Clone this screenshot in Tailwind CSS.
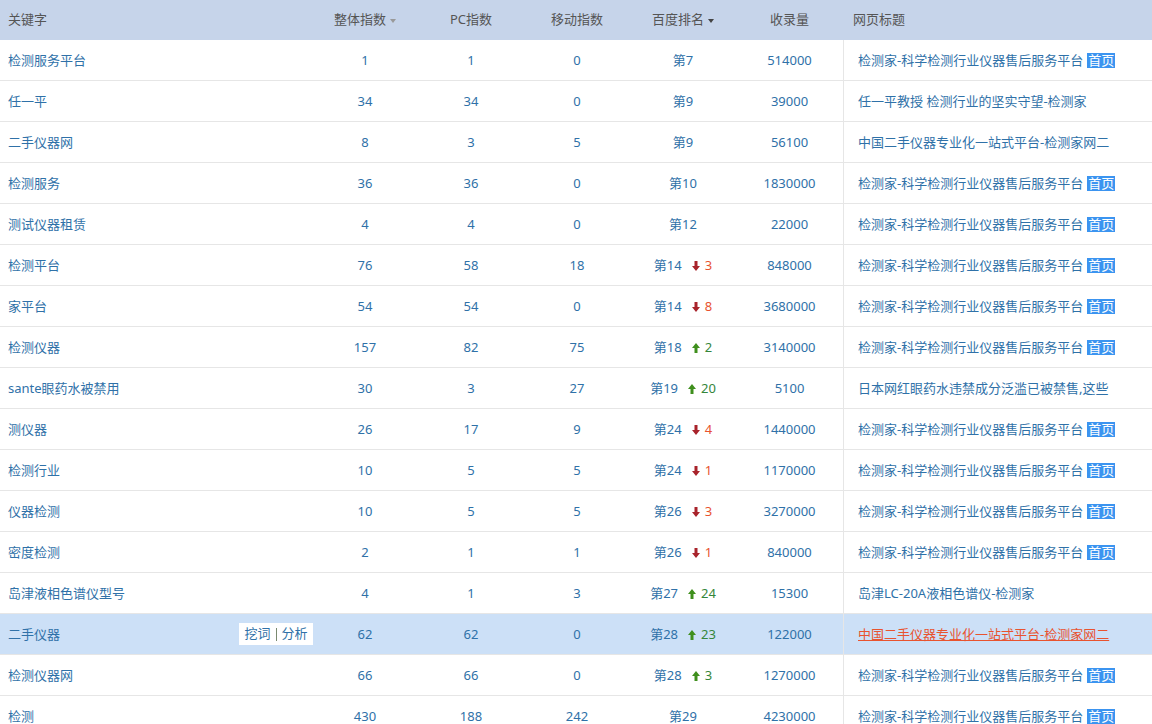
<!DOCTYPE html>
<html lang="zh-CN">
<head>
  <meta charset="UTF-8" />
  <title>关键字排名</title>
  <script src="https://cdn.jsdelivr.net/npm/@tailwindcss/browser@4"></script>
</head>
<body class="h-[724px] overflow-hidden bg-white font-['Noto_Sans','Noto_Sans_CJK_SC',sans-serif] text-[13px] text-[#2f71a8]">

  <!-- header -->
  <div class="flex h-10 items-center bg-[#c6d4ea] text-[#555]">
    <div class="w-[312px] pl-2">关键字</div>
    <div class="flex w-[106px] items-center justify-center gap-1">整体指数<i class="mt-0.5 border-x-[3.5px] border-t-4 border-x-transparent border-t-[#999]"></i></div>
    <div class="w-[106px] text-center">PC指数</div>
    <div class="w-[106px] text-center">移动指数</div>
    <div class="flex w-[106px] items-center justify-center gap-1">百度排名<i class="mt-0.5 border-x-[3.5px] border-t-4 border-x-transparent border-t-[#444]"></i></div>
    <div class="w-[107px] text-center">收录量</div>
    <div class="pl-[10px]">网页标题</div>
  </div>

  <!-- rows -->
  <table class="w-[1152px] table-fixed border-separate border-spacing-0 [&_td]:h-[41px] [&_td]:border-b [&_td]:border-[#e6e6e6] [&_td]:p-0 [&_td]:pt-0.5 [&_td:nth-child(-n+6)]:text-center [&_td:nth-child(6)]:border-r [&_td:last-child]:pl-[14px] [&_td:last-child]:text-left [&_td:first-child]:!pl-2 [&_td:first-child]:!text-left">
    <colgroup>
      <col class="w-[312px]" /><col class="w-[106px]" /><col class="w-[106px]" /><col class="w-[106px]" /><col class="w-[106px]" /><col class="w-[108px]" /><col />
    </colgroup>
    <tbody>
      <tr><td>检测服务平台</td><td>1</td><td>1</td><td>0</td><td>第7</td><td>514000</td><td>检测家-科学检测行业仪器售后服务平台<span class="ml-1 inline-block h-[15px] w-7 bg-[#3b94f0] text-center align-[0px] leading-[15px] text-white">首页</span></td></tr>
      <tr><td>任一平</td><td>34</td><td>34</td><td>0</td><td>第9</td><td>39000</td><td>任一平教授 检测行业的坚实守望-检测家</td></tr>
      <tr><td>二手仪器网</td><td>8</td><td>3</td><td>5</td><td>第9</td><td>56100</td><td>中国二手仪器专业化一站式平台-检测家网二</td></tr>
      <tr><td>检测服务</td><td>36</td><td>36</td><td>0</td><td>第10</td><td>1830000</td><td>检测家-科学检测行业仪器售后服务平台<span class="ml-1 inline-block h-[15px] w-7 bg-[#3b94f0] text-center align-[0px] leading-[15px] text-white">首页</span></td></tr>
      <tr><td>测试仪器租赁</td><td>4</td><td>4</td><td>0</td><td>第12</td><td>22000</td><td>检测家-科学检测行业仪器售后服务平台<span class="ml-1 inline-block h-[15px] w-7 bg-[#3b94f0] text-center align-[0px] leading-[15px] text-white">首页</span></td></tr>
      <tr><td>检测平台</td><td>76</td><td>58</td><td>18</td><td>第14<svg class="-mt-0.5 ml-[10px] mr-[5px] inline h-[10px] w-2" viewBox="0 0 8 10"><path fill="#a8232b" d="M2.5 0h3v5H8L4 10 0 5h2.5z"/></svg><span class="text-[#e8532f]">3</span></td><td>848000</td><td>检测家-科学检测行业仪器售后服务平台<span class="ml-1 inline-block h-[15px] w-7 bg-[#3b94f0] text-center align-[0px] leading-[15px] text-white">首页</span></td></tr>
      <tr><td>家平台</td><td>54</td><td>54</td><td>0</td><td>第14<svg class="-mt-0.5 ml-[10px] mr-[5px] inline h-[10px] w-2" viewBox="0 0 8 10"><path fill="#a8232b" d="M2.5 0h3v5H8L4 10 0 5h2.5z"/></svg><span class="text-[#e8532f]">8</span></td><td>3680000</td><td>检测家-科学检测行业仪器售后服务平台<span class="ml-1 inline-block h-[15px] w-7 bg-[#3b94f0] text-center align-[0px] leading-[15px] text-white">首页</span></td></tr>
      <tr><td>检测仪器</td><td>157</td><td>82</td><td>75</td><td>第18<svg class="-mt-0.5 ml-[10px] mr-[5px] inline h-[10px] w-2" viewBox="0 0 8 10"><path fill="#3f8f1d" d="M4 0l4 5H5.5v5h-3V5H0z"/></svg><span class="text-[#35863a]">2</span></td><td>3140000</td><td>检测家-科学检测行业仪器售后服务平台<span class="ml-1 inline-block h-[15px] w-7 bg-[#3b94f0] text-center align-[0px] leading-[15px] text-white">首页</span></td></tr>
      <tr><td>sante眼药水被禁用</td><td>30</td><td>3</td><td>27</td><td>第19<svg class="-mt-0.5 ml-[10px] mr-[5px] inline h-[10px] w-2" viewBox="0 0 8 10"><path fill="#3f8f1d" d="M4 0l4 5H5.5v5h-3V5H0z"/></svg><span class="text-[#35863a]">20</span></td><td>5100</td><td>日本网红眼药水违禁成分泛滥已被禁售,这些</td></tr>
      <tr><td>测仪器</td><td>26</td><td>17</td><td>9</td><td>第24<svg class="-mt-0.5 ml-[10px] mr-[5px] inline h-[10px] w-2" viewBox="0 0 8 10"><path fill="#a8232b" d="M2.5 0h3v5H8L4 10 0 5h2.5z"/></svg><span class="text-[#e8532f]">4</span></td><td>1440000</td><td>检测家-科学检测行业仪器售后服务平台<span class="ml-1 inline-block h-[15px] w-7 bg-[#3b94f0] text-center align-[0px] leading-[15px] text-white">首页</span></td></tr>
      <tr><td>检测行业</td><td>10</td><td>5</td><td>5</td><td>第24<svg class="-mt-0.5 ml-[10px] mr-[5px] inline h-[10px] w-2" viewBox="0 0 8 10"><path fill="#a8232b" d="M2.5 0h3v5H8L4 10 0 5h2.5z"/></svg><span class="text-[#e8532f]">1</span></td><td>1170000</td><td>检测家-科学检测行业仪器售后服务平台<span class="ml-1 inline-block h-[15px] w-7 bg-[#3b94f0] text-center align-[0px] leading-[15px] text-white">首页</span></td></tr>
      <tr><td>仪器检测</td><td>10</td><td>5</td><td>5</td><td>第26<svg class="-mt-0.5 ml-[10px] mr-[5px] inline h-[10px] w-2" viewBox="0 0 8 10"><path fill="#a8232b" d="M2.5 0h3v5H8L4 10 0 5h2.5z"/></svg><span class="text-[#e8532f]">3</span></td><td>3270000</td><td>检测家-科学检测行业仪器售后服务平台<span class="ml-1 inline-block h-[15px] w-7 bg-[#3b94f0] text-center align-[0px] leading-[15px] text-white">首页</span></td></tr>
      <tr><td>密度检测</td><td>2</td><td>1</td><td>1</td><td>第26<svg class="-mt-0.5 ml-[10px] mr-[5px] inline h-[10px] w-2" viewBox="0 0 8 10"><path fill="#a8232b" d="M2.5 0h3v5H8L4 10 0 5h2.5z"/></svg><span class="text-[#e8532f]">1</span></td><td>840000</td><td>检测家-科学检测行业仪器售后服务平台<span class="ml-1 inline-block h-[15px] w-7 bg-[#3b94f0] text-center align-[0px] leading-[15px] text-white">首页</span></td></tr>
      <tr><td>岛津液相色谱仪型号</td><td>4</td><td>1</td><td>3</td><td>第27<svg class="-mt-0.5 ml-[10px] mr-[5px] inline h-[10px] w-2" viewBox="0 0 8 10"><path fill="#3f8f1d" d="M4 0l4 5H5.5v5h-3V5H0z"/></svg><span class="text-[#35863a]">24</span></td><td>15300</td><td>岛津LC-20A液相色谱仪-检测家</td></tr>
      <tr class="bg-[#cce0f7]"><td><div class="flex items-center justify-between"><span>二手仪器</span><span class="-mr-px -mt-0.5 flex h-[22px] w-[74px] items-center justify-center gap-[5px] bg-white"><span>挖词</span><span class="h-[13px] w-px bg-[#7a8a70]"></span><span>分析</span></span></div></td><td>62</td><td>62</td><td>0</td><td>第28<svg class="-mt-0.5 ml-[10px] mr-[5px] inline h-[10px] w-2" viewBox="0 0 8 10"><path fill="#3f8f1d" d="M4 0l4 5H5.5v5h-3V5H0z"/></svg><span class="text-[#35863a]">23</span></td><td>122000</td><td><span class="text-[#e8532f] underline">中国二手仪器专业化一站式平台-检测家网二</span></td></tr>
      <tr><td>检测仪器网</td><td>66</td><td>66</td><td>0</td><td>第28<svg class="-mt-0.5 ml-[10px] mr-[5px] inline h-[10px] w-2" viewBox="0 0 8 10"><path fill="#3f8f1d" d="M4 0l4 5H5.5v5h-3V5H0z"/></svg><span class="text-[#35863a]">3</span></td><td>1270000</td><td>检测家-科学检测行业仪器售后服务平台<span class="ml-1 inline-block h-[15px] w-7 bg-[#3b94f0] text-center align-[0px] leading-[15px] text-white">首页</span></td></tr>
      <tr><td>检测</td><td>430</td><td>188</td><td>242</td><td>第29</td><td>4230000</td><td>检测家-科学检测行业仪器售后服务平台<span class="ml-1 inline-block h-[15px] w-7 bg-[#3b94f0] text-center align-[0px] leading-[15px] text-white">首页</span></td></tr>
    </tbody>
  </table>
</body>
</html>
